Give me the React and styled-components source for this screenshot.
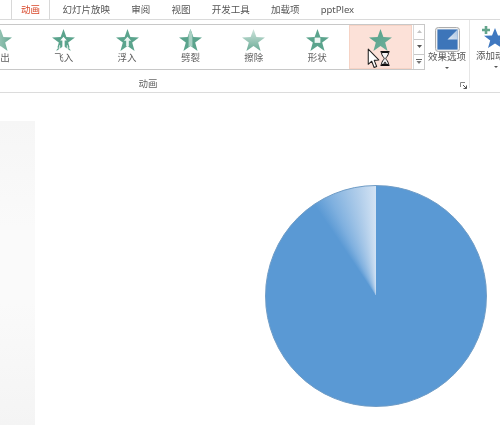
import React from 'react';
import styled, { createGlobalStyle } from 'styled-components';

const Global = createGlobalStyle`
  html, body { margin: 0; padding: 0; background: #fff; width: 500px; height: 435px; overflow: hidden; }
  #root { width: 500px; height: 435px; overflow: hidden; }
`;
const fontStack = `"Noto Sans", "Noto Sans CJK SC", sans-serif`;

const Page = styled.div`
  width: 500px; height: 435px; display: flex; flex-direction: column; background: #fff;
  font-family: ${fontStack}; overflow: hidden;
`;
const TabBar = styled.div`
  height: 19px; display: flex; padding-left: 11px; flex: none; filter: blur(0.3px);
`;
const Tab = styled.div`
  height: ${p => (p.$active ? '20px' : '19px')};
  padding: 0 ${p => (p.$active ? '9px' : '10.6px')};
  margin-right: ${p => (p.$active ? '2px' : '0')};
  font-size: 9.5px; line-height: 20px; white-space: nowrap;
  color: ${p => (p.$active ? '#d9492c' : '#555')};
  background: #fff; position: relative; z-index: 1; box-sizing: border-box;
  border: ${p => (p.$active ? '1px solid #d8d8d8' : 'none')};
  border-bottom: none; border-top: none;
`;
const Ribbon = styled.div`
  height: 74px; flex: none; display: flex; box-sizing: border-box;
  border-top: 1.5px solid #dadada; border-bottom: 1.5px solid #dcdcdc; width: 500px; overflow: hidden;
  filter: blur(0.3px);
`;
const AnimationGroup = styled.div`
  width: 470px; flex: none; display: flex; flex-direction: column; padding-top: 3.5px;
  box-sizing: border-box; border-right: 1px solid #e6e6e6; margin-bottom: 4px;
`;
const TopRow = styled.div`display: flex; height: 46px; flex: none;`;
const GalleryRow = styled.div`
  width: 425px; height: 46px; display: flex; box-sizing: border-box; flex: none;
  border-top: 1.5px solid #c8c8c8; border-bottom: 1.5px solid #c8c8c8; border-right: 1px solid #c8c8c8;
`;
const Gallery = styled.div`width: 413px; display: flex; overflow: hidden; flex: none;`;
const Cell = styled.div`
  flex: none; width: 63.4px; display: flex; flex-direction: column; align-items: center;
  padding-top: 4px; box-sizing: border-box; position: relative;
  background: ${p => (p.$selected ? '#fce1d8' : 'transparent')};
  box-shadow: ${p => (p.$selected ? 'inset 0 0 0 1px #f6d3c5' : 'none')};
  &:first-child { margin-left: -31.4px; }
`;
const CellLabel = styled.div`
  font-size: 9.5px; line-height: 11px; color: #5f5f5f; white-space: nowrap; margin-top: 1px;
`;
const ScrollColumn = styled.div`
  flex: 1; display: flex; flex-direction: column; border-left: 1px solid #d8d8d8;
`;
const ScrollButton = styled.div`
  flex: 1; display: flex; align-items: center; justify-content: center;
  border-bottom: ${p => (p.$last ? 'none' : '1px solid #c8c8c8')};
`;
const GroupFooter = styled.div`
  flex: 1; display: flex; align-items: flex-start; padding-right: 2px;
`;
const GroupLabel = styled.div`
  width: 296px; text-align: center; font-size: 9.5px; color: #666; line-height: 12px; margin-top: 8px;
`;
const Launcher = styled.svg`margin-left: auto; margin-top: 12px;`;
const EffectButton = styled.div`
  width: 44px; flex: none; display: flex; flex-direction: column; align-items: center;
  padding-top: 3.5px; box-sizing: border-box;
`;
const BigLabel = styled.div`
  font-size: 9.5px; color: #555; line-height: 11px; white-space: nowrap; margin-top: ${p => p.$top || 0}px;
`;
const Caret = styled.div`
  width: 0; height: 0; margin-top: ${p => p.$top || 4}px;
  border-left: 2px solid transparent; border-right: 2px solid transparent; border-top: 2.5px solid #555;
`;
const AddGroup = styled.div`
  flex: none; width: 30px; display: flex; flex-direction: column; padding: 5.5px 0 0 6px; box-sizing: border-box; overflow: hidden;
`;
const AddCaret = styled(Caret)`margin-left: 18px;`;
const AddIcon = styled.svg`flex: none; overflow: visible; margin-left: 4px;`;
const Stage = styled.div`flex: 1; display: flex; min-height: 0;`;
const SidePanel = styled.div`
  width: 35px; height: 304px; margin-top: 28px; flex: none;
  background: linear-gradient(180deg, #f6f6f6 0%, #fafafa 35%, #fafafa 60%, #f4f4f4 100%);
`;
const Pie = styled.div`
  width: 222px; height: 222px; border-radius: 50%; margin: 92px 0 0 230px; flex: none;
  box-sizing: border-box; border: 1px solid #6f9cc6;
  background: conic-gradient(#5a99d4 0deg, #5a99d4 326deg, #7fb0df 335deg, #b0cdea 350deg, #d3e3f4 360deg);
`;
const CursorOverlay = styled.div`position: absolute; left: 18px; top: 23px; display: flex; align-items: flex-start;`;
const Hourglass = styled.svg`margin-top: 3px;`;
const StarIcon = styled.svg`flex: none;`;
const EffectIcon = styled.svg`flex: none;`;

const STAR = '12,0 15,8.4 24,8.8 16.9,14.2 19.4,23 12,17.8 4.6,23 7.1,14.2 0,8.8 9,8.4';

function Star({ kind }) {
  const id = 'g-' + kind;
  const grad = {
    out: ['#b9d8cc', '#66a893', 0, 0, 1, 0],
    wipe: ['#d0e5dd', '#6aab96', 0, 0, 0, 1],
    solid: ['#52a088', '#73b19d', 0, 0, 1, 1],
  }[kind] || ['#5ba48d', '#5ba48d', 0, 0, 0, 1];
  return (
    <StarIcon width="23" height="22" viewBox="0 0 24 23">
      <defs>
        <linearGradient id={id} x1={grad[2]} y1={grad[3]} x2={grad[4]} y2={grad[5]}>
          <stop offset="0" stopColor={grad[0]} />
          <stop offset="1" stopColor={grad[1]} />
        </linearGradient>
      </defs>
      <polygon points={STAR} fill={`url(#${id})`} />
      {kind === 'fly' && (
        <g>
          <path d="M12 8 L8.6 12 H10.8 V19 H13.2 V12 H15.4 Z" fill="#fff" />
          <path d="M8 17v4M16 17v4M6 19v2M18 19v2" stroke="#fff" strokeWidth="0.9" />
        </g>
      )}
      {kind === 'float' && <path d="M12 8 L8.2 12.4 H10.6 V18 H13.4 V12.4 H15.8 Z" fill="#e9f4f0" />}
      {kind === 'split' && <polygon points="12,0 14,6 14,18.8 12,17.8 10,18.8 10,6" fill="#a9d1c4" />}
      {kind === 'shape' && <rect x="9" y="9" width="6" height="5.5" fill="#eef6f3" />}
    </StarIcon>
  );
}

const items = [
  ['out', '淡出'], ['fly', '飞入'], ['float', '浮入'], ['split', '劈裂'], ['wipe', '擦除'], ['shape', '形状'],
];

export default function App() {
  return (
    <Page>
      <Global />
      <TabBar>
        <Tab $active>动画</Tab>
        <Tab>幻灯片放映</Tab>
        <Tab>审阅</Tab>
        <Tab>视图</Tab>
        <Tab>开发工具</Tab>
        <Tab>加载项</Tab>
        <Tab>pptPlex</Tab>
      </TabBar>
      <Ribbon>
        <AnimationGroup>
          <TopRow>
            <GalleryRow>
              <Gallery>
                {items.map(([k, t]) => (
                  <Cell key={k}>
                    <Star kind={k} />
                    <CellLabel>{t}</CellLabel>
                  </Cell>
                ))}
                <Cell $selected>
                  <Star kind="solid" />
                  <CursorOverlay>
                    <svg width="13" height="21" viewBox="0 0 12 20">
                      <path d="M1 1 V15.5 L4.3 12.6 L6.6 18.6 L9 17.6 L6.7 11.8 L11 11.4 Z" fill="#fff" stroke="#222" strokeWidth="1" strokeLinejoin="round" />
                    </svg>
                    <Hourglass width="10" height="15" viewBox="0 0 10 15">
                      <path d="M.5 .8H9.5M.5 14.2H9.5" stroke="#111" strokeWidth="1.5" />
                      <path d="M1.5 1.5 C1.5 5 4 6 4.2 7.5 C4 9 1.5 10 1.5 13.5 H8.5 C8.5 10 6 9 5.8 7.5 C6 6 8.5 5 8.5 1.5 Z" fill="#f4f4f4" stroke="#111" strokeWidth="1" />
                      <path d="M3 12.8 L5 10.4 L7 12.8 Z" fill="#222" />
                    </Hourglass>
                  </CursorOverlay>
                </Cell>
              </Gallery>
              <ScrollColumn>
                <ScrollButton>
                  <svg width="5" height="3" viewBox="0 0 5 3"><path d="M0 3 L2.5 0 L5 3Z" fill="#c4c4c4" /></svg>
                </ScrollButton>
                <ScrollButton>
                  <svg width="5" height="3" viewBox="0 0 5 3"><path d="M0 0 L2.5 3 L5 0Z" fill="#555" /></svg>
                </ScrollButton>
                <ScrollButton $last>
                  <svg width="6" height="5" viewBox="0 0 6 5"><path d="M0 .5H6" stroke="#666" /><path d="M.5 2 L3 5 L5.5 2Z" fill="#777" /></svg>
                </ScrollButton>
              </ScrollColumn>
            </GalleryRow>
            <EffectButton>
              <EffectIcon width="25" height="25" viewBox="0 0 26 26">
                <defs>
                  <linearGradient id="fx" x1="0" y1="1" x2="1" y2="0">
                    <stop offset="0" stopColor="#dce6f2" />
                    <stop offset="1" stopColor="#a9c3e0" />
                  </linearGradient>
                </defs>
                <rect x=".5" y=".5" width="25" height="25" rx="3" fill="#f2f2f2" stroke="#a8a8a8" />
                <rect x="2.5" y="2.5" width="21" height="21" fill="#3d75b9" />
                <polygon points="23.5,2.5 23.5,13 13,13" fill="url(#fx)" />
              </EffectIcon>
              <BigLabel $top={-1.5}>效果选项</BigLabel>
              <Caret $top={5} />
            </EffectButton>
          </TopRow>
          <GroupFooter>
            <GroupLabel>动画</GroupLabel>
            <Launcher width="7" height="7" viewBox="0 0 7 7">
              <path d="M.5 5V.5H5" fill="none" stroke="#888" />
              <path d="M3 3 L6.5 6.5 M6.5 3.5V6.5H3.5" fill="none" stroke="#555" />
            </Launcher>
          </GroupFooter>
        </AnimationGroup>
        <AddGroup>
          <AddIcon width="24" height="22" viewBox="0 0 24 22">
            <polygon points="15,2 18,9.5 26,9.8 19.8,14.6 22,22 15,17.6 8,22 10.2,14.6 4,9.8 12,9.5" fill="#3f78c0" />
            <path d="M6 0V8M2 4H10" stroke="#63a58c" strokeWidth="2.6" />
          </AddIcon>
          <BigLabel $top={2}>添加动画</BigLabel>
          <AddCaret $top={5} />
        </AddGroup>
      </Ribbon>
      <Stage>
        <SidePanel />
        <Pie />
      </Stage>
    </Page>
  );
}
